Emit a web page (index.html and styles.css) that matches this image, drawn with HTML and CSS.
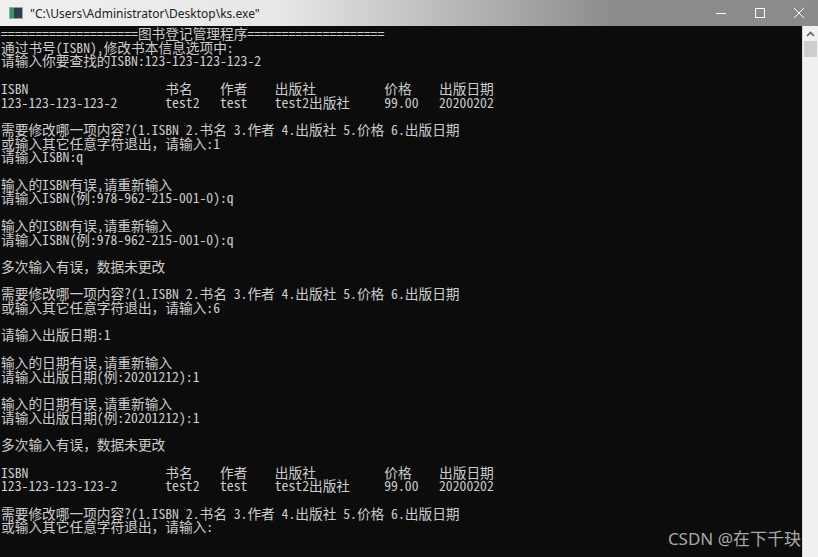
FILE: index.html
```html
<!DOCTYPE html>
<html lang="zh-CN">
<head>
  <meta charset="UTF-8">
  <title>ks.exe</title>
  <link rel="stylesheet" href="styles.css">
</head>
<body>
  <div class="window">
    <div class="titlebar">
      <div class="title">
        <span class="app-icon"><span></span></span>
        <span class="title-text">"C:\Users\Administrator\Desktop\ks.exe"</span>
      </div>
      <div class="win-btns">
        <span class="win-btn">
          <svg width="10" height="10" viewBox="0 0 10 10"><path d="M0 5.5h10" stroke="#fff" stroke-width="1"/></svg>
        </span>
        <span class="win-btn">
          <svg width="10" height="10" viewBox="0 0 10 10"><rect x="0.5" y="0.5" width="9" height="9" fill="none" stroke="#fff" stroke-width="1"/></svg>
        </span>
        <span class="win-btn">
          <svg width="10" height="10" viewBox="0 0 10 10"><path d="M0 0L10 10M10 0L0 10" stroke="#fff" stroke-width="1"/></svg>
        </span>
      </div>
    </div>

    <div class="body">
<pre class="console">====================图书登记管理程序====================
通过书号(ISBN),修改书本信息选项中:
请输入你要查找的ISBN:123-123-123-123-2

ISBN                    书名    作者    出版社          价格    出版日期
123-123-123-123-2       test2   test    test2出版社     99.00   20200202

需要修改哪一项内容?(1.ISBN 2.书名 3.作者 4.出版社 5.价格 6.出版日期
或输入其它任意字符退出，请输入:1
请输入ISBN:q

输入的ISBN有误,请重新输入
请输入ISBN(例:978-962-215-001-0):q

输入的ISBN有误,请重新输入
请输入ISBN(例:978-962-215-001-0):q

多次输入有误，数据未更改

需要修改哪一项内容?(1.ISBN 2.书名 3.作者 4.出版社 5.价格 6.出版日期
或输入其它任意字符退出，请输入:6

请输入出版日期:1

输入的日期有误,请重新输入
请输入出版日期(例:20201212):1

输入的日期有误,请重新输入
请输入出版日期(例:20201212):1

多次输入有误，数据未更改

ISBN                    书名    作者    出版社          价格    出版日期
123-123-123-123-2       test2   test    test2出版社     99.00   20200202

需要修改哪一项内容?(1.ISBN 2.书名 3.作者 4.出版社 5.价格 6.出版日期
或输入其它任意字符退出，请输入:</pre>
      <div class="scrollbar">
        <svg class="arrow" width="9" height="6" viewBox="0 0 9 6"><path d="M1 5L4.5 1.5L8 5" fill="none" stroke="#606060" stroke-width="1.6"/></svg>
        <div class="thumb"></div>
      </div>
    </div>

    <div class="watermark">CSDN @在下千玦</div>
  </div>
</body>
</html>
```

FILE: styles.css
```css
body {
  margin: 0;
  background: #0c0c0c;
}
.window {
  position: relative;
  width: 818px;
  height: 557px;
  overflow: hidden;
  display: flex;
  flex-direction: column;
}
.titlebar {
  height: 26px;
  flex-shrink: 0;
  display: flex;
  justify-content: space-between;
  align-items: center;
  background: linear-gradient(to right, #f0f0f0 0%, #e6e6e6 35%, #8c8c8c 75%, #8a8a8a 100%);
  font-family: "Noto Sans", "Liberation Sans", sans-serif;
  font-size: 12px;
}
.title {
  display: flex;
  align-items: center;
  gap: 7px;
  padding-left: 9px;
  color: #222;
}
.app-icon {
  width: 12px;
  height: 10px;
  background: #2d3e4f;
  border: 1px solid #9aa5ae;
  display: flex;
}
.app-icon span {
  width: 4px;
  background: #3a9a5a;
}
.win-btns {
  display: flex;
  height: 100%;
}
.win-btn {
  width: 39px;
  display: flex;
  align-items: center;
  justify-content: center;
}
.body {
  flex: 1;
  display: flex;
  min-height: 0;
}
.console {
  flex: 1;
  margin: 0;
  padding: 1px 0 0 1px;
  color: #cccccc;
  font-family: "Noto Sans Mono CJK SC", "Liberation Mono", "Noto Sans CJK SC", monospace;
  font-size: 13.7px;
  line-height: 13.7px;
  white-space: pre;
  overflow: hidden;
}
.scrollbar {
  width: 15px;
  background: #f0f0f0;
  border-left: 1px solid #d8d8d8;
  display: flex;
  flex-direction: column;
  align-items: center;
}
.arrow {
  margin-top: 5px;
}
.thumb {
  margin-top: 4px;
  width: 13px;
  height: 16px;
  background: #cdcdcd;
}
.watermark {
  position: absolute;
  right: 17px;
  bottom: 7px;
  color: #a8a8a8;
  font-family: "Noto Sans", "Noto Sans CJK SC", sans-serif;
  font-size: 17px;
}
```
